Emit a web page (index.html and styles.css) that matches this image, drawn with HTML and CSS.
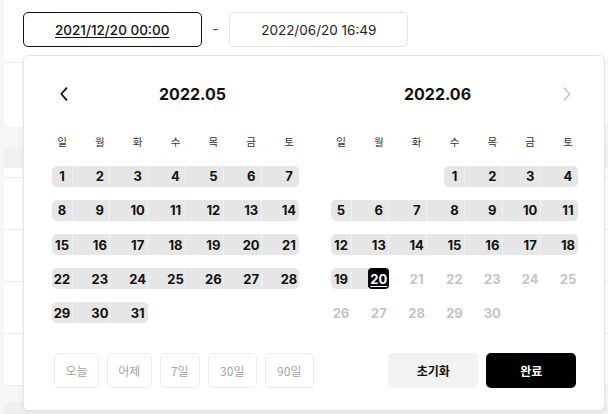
FILE: index.html
```html
<!DOCTYPE html>
<html lang="ko">
<head>
<meta charset="utf-8">
<title>기간 선택</title>
<link rel="stylesheet" href="styles.css">
</head>
<body>
<div class="page">
  <div class="top-card">
    <div class="range-row">
      <div class="date-input active">2021/12/20 00:00</div>
      <span class="dash">-</span>
      <div class="date-input">2022/06/20 16:49</div>
    </div>
  </div>

  <div class="table">
    <div class="thead"></div>
    <div class="spacer"></div>
    <div class="tr"></div>
    <div class="tr"></div>
    <div class="tr"></div>
    <div class="tr"></div>
  </div>
  <div class="bottom-card"></div>

  <div class="popup">
    <div class="cals">
      <div class="cal">
        <div class="cal-head">
          <span class="nav prev"><svg width="8" height="14" viewBox="0 0 8 14"><path d="M6.5 1.2 L1.3 7 L6.5 12.8" fill="none" stroke="#111" stroke-width="1.8" stroke-linecap="round" stroke-linejoin="round"/></svg></span>
          <span class="title">2022.05</span>
        </div>
        <div class="wk"><span>일</span><span>월</span><span>화</span><span>수</span><span>목</span><span>금</span><span>토</span></div>
        <div class="days">
          <span class="d r s">1</span><span class="d r c">2</span><span class="d r c">3</span><span class="d r c">4</span><span class="d r c">5</span><span class="d r c">6</span><span class="d r c e">7</span>
          <span class="d r s">8</span><span class="d r c">9</span><span class="d r c">10</span><span class="d r c">11</span><span class="d r c">12</span><span class="d r c">13</span><span class="d r c e">14</span>
          <span class="d r s">15</span><span class="d r c">16</span><span class="d r c">17</span><span class="d r c">18</span><span class="d r c">19</span><span class="d r c">20</span><span class="d r c e">21</span>
          <span class="d r s">22</span><span class="d r c">23</span><span class="d r c">24</span><span class="d r c">25</span><span class="d r c">26</span><span class="d r c">27</span><span class="d r c e">28</span>
          <span class="d r s">29</span><span class="d r c">30</span><span class="d r c e">31</span>
        </div>
      </div>
      <div class="cal">
        <div class="cal-head">
          <span class="title">2022.06</span>
          <span class="nav next"><svg width="8" height="14" viewBox="0 0 8 14"><path d="M1.5 1.2 L6.7 7 L1.5 12.8" fill="none" stroke="#c4c4c4" stroke-width="1.6" stroke-linecap="round" stroke-linejoin="round"/></svg></span>
        </div>
        <div class="wk"><span>일</span><span>월</span><span>화</span><span>수</span><span>목</span><span>금</span><span>토</span></div>
        <div class="days">
          <span class="d"></span><span class="d"></span><span class="d"></span><span class="d r s">1</span><span class="d r c">2</span><span class="d r c">3</span><span class="d r c e">4</span>
          <span class="d r s">5</span><span class="d r c">6</span><span class="d r c">7</span><span class="d r c">8</span><span class="d r c">9</span><span class="d r c">10</span><span class="d r c e">11</span>
          <span class="d r s">12</span><span class="d r c">13</span><span class="d r c">14</span><span class="d r c">15</span><span class="d r c">16</span><span class="d r c">17</span><span class="d r c e">18</span>
          <span class="d r s">19</span><span class="d r c sel">20</span><span class="d off">21</span><span class="d off">22</span><span class="d off">23</span><span class="d off">24</span><span class="d off">25</span>
          <span class="d off">26</span><span class="d off">27</span><span class="d off">28</span><span class="d off">29</span><span class="d off">30</span>
        </div>
      </div>
    </div>
    <div class="foot">
      <div class="quick">
        <button class="q q-today">오늘</button>
        <button class="q q-yday">어제</button>
        <button class="q q-7">7일</button>
        <button class="q q-30">30일</button>
        <button class="q q-90">90일</button>
      </div>
      <div class="act">
        <button class="btn reset">초기화</button>
        <button class="btn done">완료</button>
      </div>
    </div>
  </div>
</div>
</body>
</html>
```

FILE: styles.css
```css
* { box-sizing: border-box; }
html, body { overflow: hidden; }
body {
  margin: 0;
  width: 608px;
  height: 414px;
  background: #f6f6f6;
  font-family: Inter, "Noto Sans CJK KR", sans-serif;
  color: #111;
}
.page {
  position: relative;
  height: 414px;
  padding-left: 4px;
  overflow: hidden;
}
.top-card {
  height: 127px;
  background: #fff;
  border-radius: 0 0 8px 8px;
}
.range-row {
  height: 63px;
  border-bottom: 1px solid #ececec;
  padding: 12px 0 0 18.7px;
  display: flex;
  align-items: flex-start;
}
.date-input {
  width: 179px;
  height: 35px;
  border: 1px solid #e3e3e3;
  border-radius: 5px;
  display: flex;
  align-items: center;
  justify-content: center;
  font-size: 13.5px;
  color: #222;
  background: #fff;
}
.date-input.active {
  border-color: #111;
  font-weight: 500;
  color: #111;
  text-decoration: underline;
  text-underline-offset: 2px;
}
.dash {
  width: 27.6px;
  text-align: center;
  line-height: 35px;
  font-size: 13px;
  color: #333;
}
.table {
  margin-top: 20px;
  background: #fff;
}
.thead { height: 21px; background: #f1f1f1; }
.spacer { height: 10px; border-bottom: 1px solid #ececec; }
.tr { height: 52px; border-bottom: 1px solid #ececec; }
.bottom-card {
  margin-top: 16px;
  height: 12px;
  background: #efefef;
  border-radius: 8px 8px 0 0;
}

.popup {
  position: absolute;
  left: 23px;
  top: 55px;
  width: 582px;
  height: 356px;
  background: #fff;
  border: 1px solid #e4e4e4;
  border-radius: 6px;
  box-shadow: 0 2px 6px rgba(0, 0, 0, 0.06);
  padding: 0 25.5px 0 27.5px;
}
.cals { display: flex; gap: 31px; }
.cal { width: 248px; }
.cal-head {
  height: 34px;
  margin-top: 21px;
  display: flex;
  align-items: center;
}
.nav {
  width: 34px;
  height: 34px;
  display: flex;
  align-items: center;
}
.nav.prev { justify-content: flex-start; padding-left: 8px; }
.nav.next { justify-content: flex-end; padding-right: 7.5px; }
.nav svg { display: block; }
.title {
  flex: 1;
  text-align: center;
  font-size: 16px;
  font-weight: 700;
  color: #111;
}
.wk {
  margin-top: 24px;
  height: 14px;
  display: grid;
  grid-template-columns: repeat(7, 21px);
  column-gap: 16.83px;
}
.wk span {
  text-align: center;
  font-family: "Noto Sans CJK KR", sans-serif;
  font-size: 10.5px;
  line-height: 14px;
  color: #333;
}
.days {
  margin-top: 16.7px;
  display: grid;
  grid-template-columns: repeat(7, 21px);
  column-gap: 16.83px;
  row-gap: 13.2px;
}
.d {
  position: relative;
  height: 21px;
  display: flex;
  align-items: center;
  justify-content: center;
  font-size: 13px;
  font-weight: 700;
  color: #111;
  white-space: nowrap;
}
.d.r { background: #e6e6e6; }
.d.r.c::before {
  content: "";
  position: absolute;
  top: 0;
  bottom: 0;
  right: 100%;
  width: 16.83px;
  background: #e6e6e6;
  border-left: 1px solid #f1f1f1;
}
.d.s { border-radius: 5px 0 0 5px; }
.d.e { border-radius: 0 5px 5px 0; }
.d.sel {
  background: #000;
  color: #fff;
  border-radius: 4px;
  text-decoration: underline;
  text-underline-offset: 2px;
}
.d.off { color: #c4c4c4; }

.foot {
  margin-top: 29.8px;
  padding: 0 2.2px 0 2.8px;
  display: flex;
  justify-content: space-between;
}
.quick { display: flex; gap: 7.7px; }
.q {
  height: 35px;
  border: 1px solid #ebebeb;
  border-radius: 5px;
  padding: 0;
  background: #fff;
  font-family: "Noto Sans CJK KR", sans-serif;
  font-size: 12px;
  color: #a5a5a5;
  display: flex;
  align-items: center;
  justify-content: center;
}
.q-today { width: 44.7px; }
.q-yday { width: 45.3px; }
.q-7 { width: 40.3px; }
.q-30 { width: 49.3px; }
.q-90 { width: 49.3px; }
.act { display: flex; gap: 8px; }
.btn {
  width: 90px;
  height: 35px;
  border: 0;
  border-radius: 5px;
  font-family: "Noto Sans CJK KR", sans-serif;
  font-size: 12px;
  font-weight: 700;
  display: flex;
  align-items: center;
  justify-content: center;
}
.reset { background: #f2f2f2; color: #111; }
.done { background: #000; color: #fff; }
```
